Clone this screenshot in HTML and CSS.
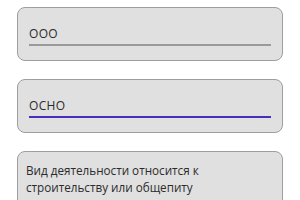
FILE: index.html
```html
<!DOCTYPE html>
<html>
<head>
<meta charset="utf-8">
<link rel="stylesheet" href="styles.css">
</head>
<body>
<div class="list">
  <div class="card">
    <div class="field">
      <span class="value">ООО</span>
    </div>
  </div>
  <div class="card">
    <div class="field active">
      <span class="value">ОСНО</span>
    </div>
  </div>
  <div class="card note">
    <p class="text">Вид деятельности относится к строительству или общепиту</p>
  </div>
</div>
</body>
</html>
```
FILE: styles.css
```css
html, body {
  margin: 0;
  padding: 0;
  background: #ffffff;
}
body {
  font-family: "Open Sans", "Noto Sans", sans-serif;
  color: #2b2b2b;
  width: 300px;
  height: 200px;
  overflow: hidden;
}
.list {
  display: flex;
  flex-direction: column;
  gap: 18px;
  padding: 7px 17px 0 17px;
}
.card {
  box-sizing: border-box;
  height: 54px;
  flex-shrink: 0;
  background: #e0e0e0;
  border: 1px solid #9e9e9e;
  border-radius: 8px;
  padding: 0 11px;
  display: flex;
  flex-direction: column;
  justify-content: flex-end;
}
.field {
  box-sizing: border-box;
  border-bottom: 2px solid #9a9a9a;
  margin-bottom: 14px;
  height: 24px;
  display: flex;
  align-items: flex-end;
  padding-bottom: 2px;
}
.field.active {
  border-bottom-color: #4a2fbd;
}
.value {
  font-size: 12px;
  line-height: 16px;
  letter-spacing: 0.3px;
}
.card.note {
  height: 60px;
  justify-content: flex-start;
  padding: 10px 8px 0 8px;
}
.text {
  margin: 0;
  font-size: 11.7px;
  line-height: 17px;
}
```
